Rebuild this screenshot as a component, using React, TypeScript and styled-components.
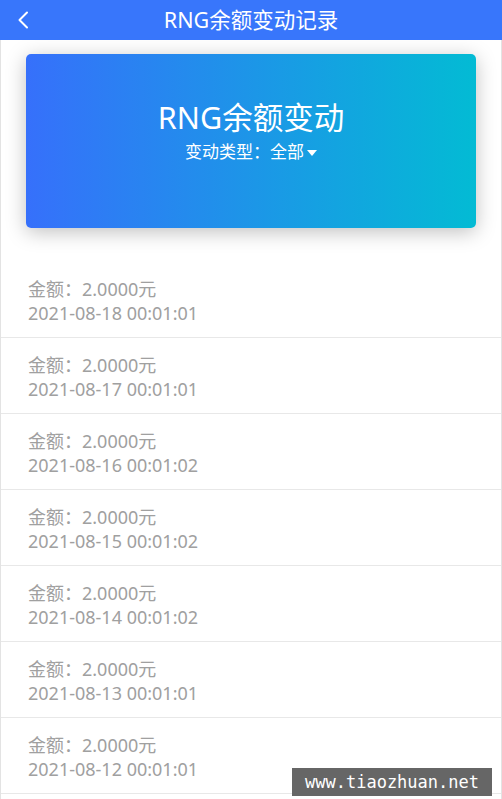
import React from "react";
import styled, { createGlobalStyle } from "styled-components";

const GlobalStyle = createGlobalStyle`
    html, body {
        margin: 0;
        padding: 0;
        background: #ffffff;
    }
    * {
        box-sizing: border-box;
    }
`;

const records = [
    { amount: "2.0000", time: "2021-08-18 00:01:01" },
    { amount: "2.0000", time: "2021-08-17 00:01:01" },
    { amount: "2.0000", time: "2021-08-16 00:01:02" },
    { amount: "2.0000", time: "2021-08-15 00:01:02" },
    { amount: "2.0000", time: "2021-08-14 00:01:02" },
    { amount: "2.0000", time: "2021-08-13 00:01:01" },
    { amount: "2.0000", time: "2021-08-12 00:01:01" },
];

const App = () => {
    return (
        <>
            <GlobalStyle />
            <Page>
                <Header>
                    <BackButton>
                        <svg width="12" height="18" viewBox="0 0 12 18">
                            <polyline
                                points="10,1.5 2.5,9 10,16.5"
                                fill="none"
                                stroke="#ffffff"
                                strokeWidth="2"
                                strokeLinecap="round"
                                strokeLinejoin="round"
                            />
                        </svg>
                    </BackButton>
                    <HeaderTitle>RNG余额变动记录</HeaderTitle>
                </Header>
                <CardWrap>
                    <Card>
                        <CardTitle>RNG余额变动</CardTitle>
                        <TypeSelect>
                            变动类型：全部
                            <Caret />
                        </TypeSelect>
                    </Card>
                </CardWrap>
                <List>
                    {records.map((r) => (
                        <Item key={r.time}>
                            <Line>金额：{r.amount}元</Line>
                            <Line>{r.time}</Line>
                        </Item>
                    ))}
                </List>
            </Page>
            <Watermark>www.tiaozhuan.net</Watermark>
        </>
    );
};

const Page = styled.div`
    min-height: 100vh;
    border-left: 1px solid #e3e3e3;
    border-right: 1px solid #e3e3e3;
    font-family: "Noto Sans", "Noto Sans CJK SC", sans-serif;
`;

const Header = styled.header`
    position: relative;
    display: flex;
    align-items: center;
    justify-content: center;
    height: 40px;
    margin: 0 -1px;
    background-color: #3876fb;
`;

const BackButton = styled.span`
    position: absolute;
    left: 17px;
    top: 11px;
    display: flex;
`;

const HeaderTitle = styled.h1`
    margin: 0;
    color: #ffffff;
    font-size: 21.5px;
    font-weight: 400;
    line-height: 40px;
`;

const CardWrap = styled.div`
    padding: 14px 25px 0;
`;

const Card = styled.div`
    display: flex;
    flex-direction: column;
    align-items: center;
    height: 174px;
    padding-top: 43px;
    border-radius: 5px;
    background: linear-gradient(90deg, #3670fb 0%, #03bbd4 100%);
    box-shadow: 0 4px 20px rgba(0, 0, 0, 0.25);
    color: #ffffff;
`;

const CardTitle = styled.h2`
    margin: 0;
    font-size: 30.5px;
    font-weight: 400;
    line-height: 40px;
`;

const TypeSelect = styled.div`
    display: flex;
    align-items: center;
    font-size: 17px;
    line-height: 30px;
`;

const Caret = styled.span`
    width: 0;
    height: 0;
    margin-left: 3px;
    margin-top: 1px;
    border-left: 5px solid transparent;
    border-right: 5px solid transparent;
    border-top: 6px solid #ffffff;
`;

const List = styled.ul`
    margin: 34px 0 0;
    padding: 0;
    list-style: none;
`;

const Item = styled.li`
    height: 76px;
    padding: 15px 0 0 27px;
    border-bottom: 1px solid #e8e8e8;
`;

const Line = styled.div`
    color: #a0a0a0;
    font-size: 18px;
    line-height: 24px;
`;

const Watermark = styled.div`
    position: fixed;
    right: 10px;
    bottom: 3px;
    padding: 0 13px;
    height: 28px;
    line-height: 28px;
    background-color: #666666;
    color: #ffffff;
    font-family: "DejaVu Sans Mono", monospace;
    font-size: 17px;
`;

export default App;
